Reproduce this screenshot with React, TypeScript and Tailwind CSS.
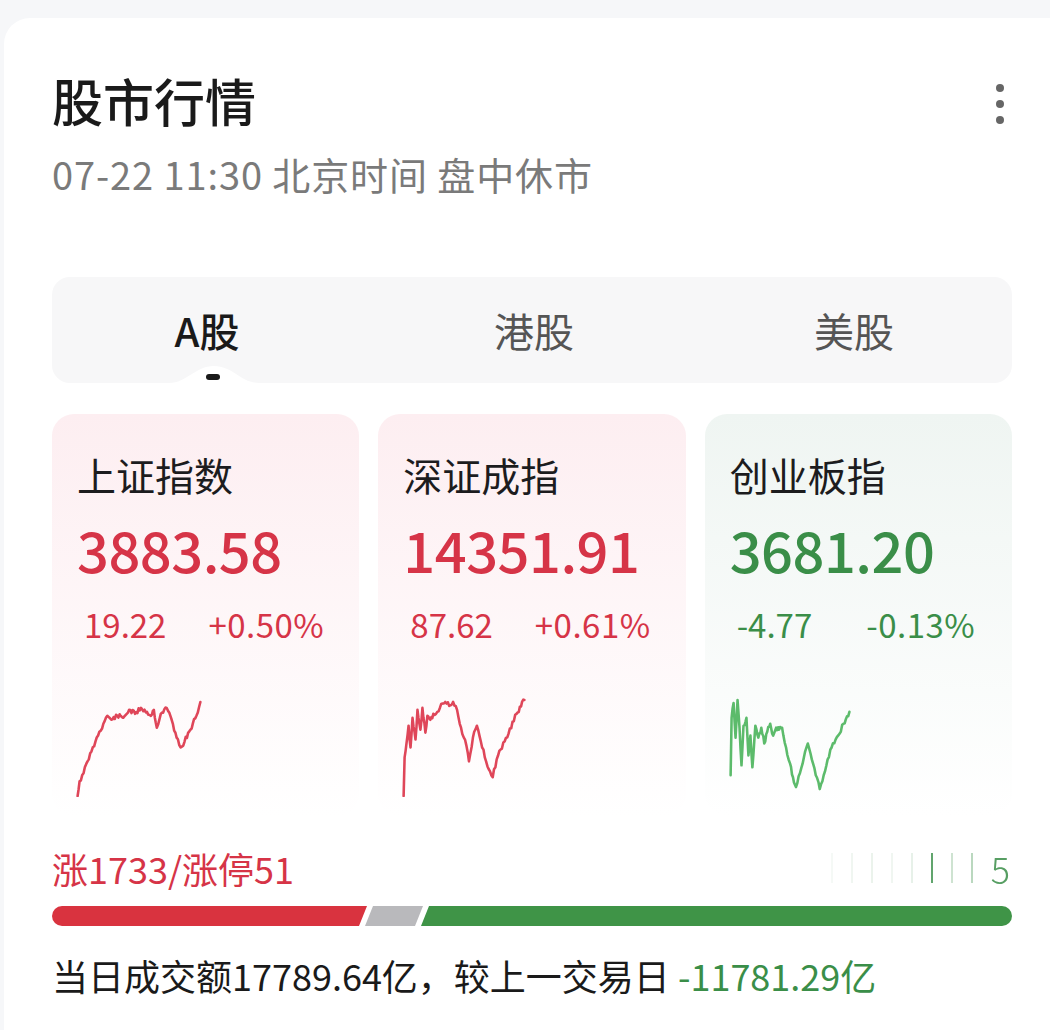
import { useMemo } from "react";

const FONT = { fontFamily: '"Noto Sans CJK SC", "Noto Sans", sans-serif' };

type Pt = [number, number];

// jagged line through key points, deterministic noise
function sparkPath(keys: Pt[], amp: number, seed: number) {
  let s = seed;
  const rnd = () => {
    s = (s * 9301 + 49297) % 233280;
    return s / 233280 - 0.5;
  };
  const out: string[] = [];
  for (let i = 0; i < keys.length - 1; i++) {
    const [x0, y0] = keys[i];
    const [x1, y1] = keys[i + 1];
    const steps = Math.max(1, Math.round((x1 - x0) / 1.2));
    for (let k = 0; k < steps; k++) {
      const t = k / steps;
      const x = x0 + (x1 - x0) * t;
      const y = y0 + (y1 - y0) * t + (k === 0 ? 0 : rnd() * amp);
      out.push(`${x.toFixed(1)},${y.toFixed(1)}`);
    }
  }
  const last = keys[keys.length - 1];
  out.push(`${last[0]},${last[1]}`);
  return "M" + out.join(" L");
}

const SH: Pt[] = [
  [0, 99], [2, 84], [6, 76], [10, 64], [14, 54], [18, 44], [22, 34], [26, 26],
  [30, 18], [34, 22], [40, 18], [46, 20], [52, 12], [58, 16], [64, 10], [70, 14],
  [74, 18], [77, 12], [80, 30], [84, 16], [90, 10], [95, 22], [100, 40], [104, 50],
  [108, 44], [114, 32], [120, 18], [124, 4],
];
const SZ: Pt[] = [
  [0, 99], [1, 60], [3, 45], [5, 28], [7, 50], [9, 20], [12, 42], [14, 12],
  [17, 32], [19, 10], [22, 35], [24, 18], [27, 22], [30, 16], [34, 14], [38, 6],
  [42, 4], [46, 8], [50, 4], [54, 12], [58, 30], [62, 42], [66, 64], [70, 40],
  [74, 28], [78, 44], [82, 60], [86, 72], [90, 80], [94, 62], [98, 52], [102, 44],
  [106, 36], [110, 24], [114, 16], [122, 2],
];
const SC: Pt[] = [
  [0, 78], [1, 20], [3, 5], [5, 40], [7, 2], [9, 30], [11, 68], [13, 28],
  [16, 20], [18, 58], [20, 38], [22, 70], [25, 28], [28, 40], [31, 30], [34, 46],
  [37, 34], [40, 26], [43, 38], [46, 30], [49, 32], [52, 30], [56, 50], [60, 66],
  [63, 80], [66, 90], [70, 76], [74, 60], [78, 46], [82, 62], [86, 78], [90, 92],
  [94, 78], [98, 62], [102, 50], [106, 42], [110, 36], [114, 26], [120, 14],
];

function Spark({ keys, color, seed }: { keys: Pt[]; color: string; seed: number }) {
  const d = useMemo(() => sparkPath(keys, 5, seed), [keys, seed]);
  return (
    <svg width="126" height="100" viewBox="-1 -1 126 101" className="block">
      <path d={d} fill="none" stroke={color} strokeWidth="2.6" strokeLinejoin="round" strokeLinecap="round" />
    </svg>
  );
}

type Index = {
  name: string;
  value: string;
  change: string;
  pct: string;
  up: boolean;
  keys: Pt[];
  seed: number;
};

const indices: Index[] = [
  { name: "上证指数", value: "3883.58", change: "19.22", pct: "+0.50%", up: true, keys: SH, seed: 11 },
  { name: "深证成指", value: "14351.91", change: "87.62", pct: "+0.61%", up: true, keys: SZ, seed: 37 },
  { name: "创业板指", value: "3681.20", change: "-4.77", pct: "-0.13%", up: false, keys: SC, seed: 73 },
];

function IndexCard({ item }: { item: Index }) {
  const color = item.up ? "text-[#d63447]" : "text-[#3a8e48]";
  return (
    <div
      className={
        "h-[402px] rounded-[22px] pl-[25px] pt-[38px] " +
        (item.up
          ? "bg-gradient-to-b from-[#fdeef1] to-[#ffffff]"
          : "bg-gradient-to-b from-[#eff5f2] to-[#ffffff]")
      }
    >
      <div className="text-[39px] leading-[44px] text-[#1c1c1e]">{item.name}</div>
      <div className={`mt-[21px] text-[56px] leading-[64px] font-medium tracking-[-0.5px] ${color}`}>
        {item.value}
      </div>
      <div
        className={`mt-[23px] ml-[7px] flex text-[33px] leading-[40px] ${color} ${
          item.up ? "gap-[42px]" : "gap-[54px]"
        }`}
      >
        <span>{item.change}</span>
        <span className="tracking-[0.5px]">{item.pct}</span>
      </div>
      <div className="mt-[53px] -ml-[1px]">
        <Spark keys={item.keys} color={item.up ? "#df4659" : "#5cbb6b"} seed={item.seed} />
      </div>
    </div>
  );
}

export default function App() {
  return (
    <div className="h-[1030px] overflow-hidden bg-[#f6f7f9] pl-1 pt-[18px]" style={FONT}>
      <div className="-mr-8 h-[1100px] rounded-t-[26px] bg-white pl-[48px] pt-[52px]">
        <div className="w-[960px]">
          {/* header */}
          <div className="flex items-start justify-between">
            <div>
              <h1 className="text-[51px] leading-[60px] font-medium text-[#1a1a1a]">股市行情</h1>
              <p className="mt-[22px] text-[38px] leading-[44px] tracking-[0.9px] text-[#7a7a7a]">
                07-22 11:30 北京时间 盘中休市
              </p>
            </div>
            <div className="mr-[8px] mt-[14px] flex flex-col gap-[8px]">
              <span className="h-[8px] w-[8px] rounded-full bg-[#666666]" />
              <span className="h-[8px] w-[8px] rounded-full bg-[#666666]" />
              <span className="h-[8px] w-[8px] rounded-full bg-[#666666]" />
            </div>
          </div>

          {/* tabs */}
          <div className="relative mt-[81px] grid h-[106px] grid-cols-3 rounded-[18px] bg-[#f7f7f8] text-[40px] leading-[48px]">
            <div className="relative flex items-center justify-center pr-[10px] text-[#1a1a1a] font-medium">
              A股
              <svg width="90" height="20" viewBox="0 0 90 20" className="absolute bottom-0 left-[117px]">
                <path d="M0 20 C18 20 26 3 45 3 C64 3 72 20 90 20 Z" fill="#ffffff" />
              </svg>
              <span className="absolute bottom-[3px] left-[154px] h-[6px] w-[14px] rounded-full bg-[#1a1a1a]" />
            </div>
            <div className="flex items-center justify-center pl-[4px] text-[#555555]">港股</div>
            <div className="flex items-center justify-center pl-[4px] text-[#555555]">美股</div>
          </div>

          {/* index cards */}
          <div className="mt-[31px] grid grid-cols-3 gap-[19px]">
            {indices.map((it) => (
              <IndexCard key={it.name} item={it} />
            ))}
          </div>

          {/* breadth */}
          <div className="mt-[30px] flex items-center justify-between text-[36px] leading-[44px]">
            <span className="text-[#d63447]">涨1733/涨停51</span>
            <div className="flex h-[36px] items-center gap-[18px] pr-[2px] blur-[0.6px]">
              <span className="h-[30px] w-[2px] bg-[#3a8e48] opacity-[0.05]" />
              <span className="h-[30px] w-[2px] bg-[#3a8e48] opacity-[0.08]" />
              <span className="h-[30px] w-[2px] bg-[#3a8e48] opacity-[0.1]" />
              <span className="h-[30px] w-[2px] bg-[#3a8e48] opacity-[0.08]" />
              <span className="h-[30px] w-[2px] bg-[#3a8e48] opacity-[0.12]" />
              <span className="h-[30px] w-[2px] bg-[#3a8e48] opacity-[0.8]" />
              <span className="h-[30px] w-[2px] bg-[#3a8e48] opacity-[0.25]" />
              <span className="h-[30px] w-[2px] bg-[#3a8e48] opacity-[0.35]" />
              <span className="text-[#3a8e48] opacity-[0.85] text-[36px] leading-[36px] font-light">5</span>
            </div>
          </div>

          <div className="mt-[16px] flex h-[20px]">
            <div className="w-[315px] rounded-l-full bg-[#d9333f] [clip-path:polygon(0_0,100%_0,calc(100%-8px)_100%,0_100%)]" />
            <div className="-ml-[2px] w-[58px] bg-[#b9b9bc] [clip-path:polygon(8px_0,100%_0,calc(100%-8px)_100%,0_100%)]" />
            <div className="-ml-[2px] flex-1 rounded-r-full bg-[#3f9447] [clip-path:polygon(8px_0,100%_0,100%_100%,0_100%)]" />
          </div>

          <p className="mt-[27px] text-[36px] leading-[44px] text-[#1a1a1a]">
            当日成交额17789.64亿，较上一交易日 <span className="text-[#3a8e48]">-11781.29亿</span>
          </p>
        </div>
      </div>
    </div>
  );
}
